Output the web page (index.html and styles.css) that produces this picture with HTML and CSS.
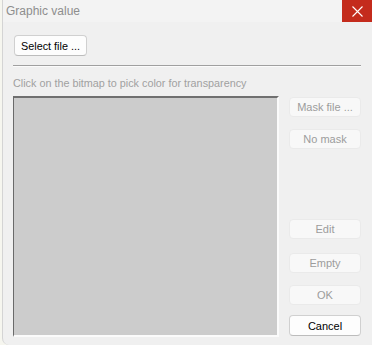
FILE: index.html
```html
<!DOCTYPE html>
<html>
<head>
<meta charset="utf-8">
<link rel="stylesheet" href="styles.css">
</head>
<body>
<div class="window">
  <div class="titlebar">
    <span class="title">Graphic value</span>
    <span class="close"><svg width="11" height="11" viewBox="0 0 11 11"><path d="M0.5 0.5 L10.5 10.5 M10.5 0.5 L0.5 10.5" stroke="#fff" stroke-width="1.1" fill="none"/></svg></span>
  </div>
  <div class="content">
    <button class="btn btn-select">Select file ...</button>
    <div class="sep"></div>
    <div class="hint">Click on the bitmap to pick color for transparency</div>
    <div class="main">
      <div class="bitmap"></div>
      <div class="side">
        <button class="btn disabled b-mask">Mask file ...</button>
        <button class="btn disabled b-nomask">No mask</button>
        <div class="spacer"></div>
        <button class="btn disabled">Edit</button>
        <button class="btn disabled b-empty">Empty</button>
        <button class="btn disabled b-ok">OK</button>
        <button class="btn b-cancel">Cancel</button>
      </div>
    </div>
  </div>
</div>
</body>
</html>
```
FILE: styles.css
```css
html, body {
  margin: 0;
  padding: 0;
}
body {
  width: 372px;
  height: 345px;
  overflow: hidden;
  background: #f6f6ef;
  font-family: "Liberation Sans", Arial, sans-serif;
  font-size: 11px;
}
.window {
  margin-left: 2px;
  height: 345px;
  border-left: 1px solid #d4d4d4;
  border-bottom-left-radius: 7px;
  background: #f0f0f0;
  display: flex;
  flex-direction: column;
  box-sizing: border-box;
}
.titlebar {
  height: 22px;
  background: #f3f3f3;
  display: flex;
  align-items: stretch;
  justify-content: space-between;
}
.title {
  padding-left: 3px;
  line-height: 22px;
  font-size: 12px;
  color: #8e8e8e;
  font-family: "Liberation Sans", Arial, sans-serif;
}
.close {
  width: 30px;
  background: #c42b1c;
  display: flex;
  align-items: center;
  justify-content: center;
}
.close svg {
  display: block;
}
.content {
  padding: 13px 11px 0 10px;
  display: flex;
  flex-direction: column;
}
.btn {
  font-family: "Liberation Sans", Arial, sans-serif;
  font-size: 11px;
  height: 20px;
  padding: 0;
  margin: 0;
  border-radius: 4px;
  box-sizing: border-box;
  background: #fdfdfd;
  border: 1px solid #d0d0d0;
  border-bottom-color: #bcbcbc;
  color: #000;
  line-height: 18px;
}
.btn.disabled {
  background: #f8f8f8;
  border: 1px solid #eaeaea;
  color: #9c9c9c;
}
.btn-select {
  align-self: flex-start;
  margin-left: 1px;
  width: 73px;
  height: 21px;
  font-size: 10.8px;
}
.sep {
  margin-top: 9px;
  height: 1px;
  background: #a0a0a0;
  border-bottom: 1px solid #fbfbfb;
}
.hint {
  margin-top: 9px;
  height: 14px;
  line-height: 14px;
  font-size: 10.8px;
  color: #a0a0a0;
}
.main {
  margin-top: 6px;
  display: flex;
  gap: 10px;
}
.bitmap {
  width: 266px;
  height: 241px;
  box-sizing: border-box;
  background: #cccccc;
  border-top: 2px solid #6f6f6f;
  border-left: 1px solid #6a6a6a;
  border-right: 2px solid #fbfbfb;
  border-bottom: 2px solid #fbfbfb;
}
.side {
  width: 72px;
  display: flex;
  flex-direction: column;
}
.b-mask { margin-top: 1px; }
.b-nomask { margin-top: 12px; }
.spacer { flex: 1; }
.b-empty { margin-top: 14px; }
.b-ok { margin-top: 12px; }
.b-cancel { margin-top: 10px; height: 21px; margin-bottom: 1px; }
```
